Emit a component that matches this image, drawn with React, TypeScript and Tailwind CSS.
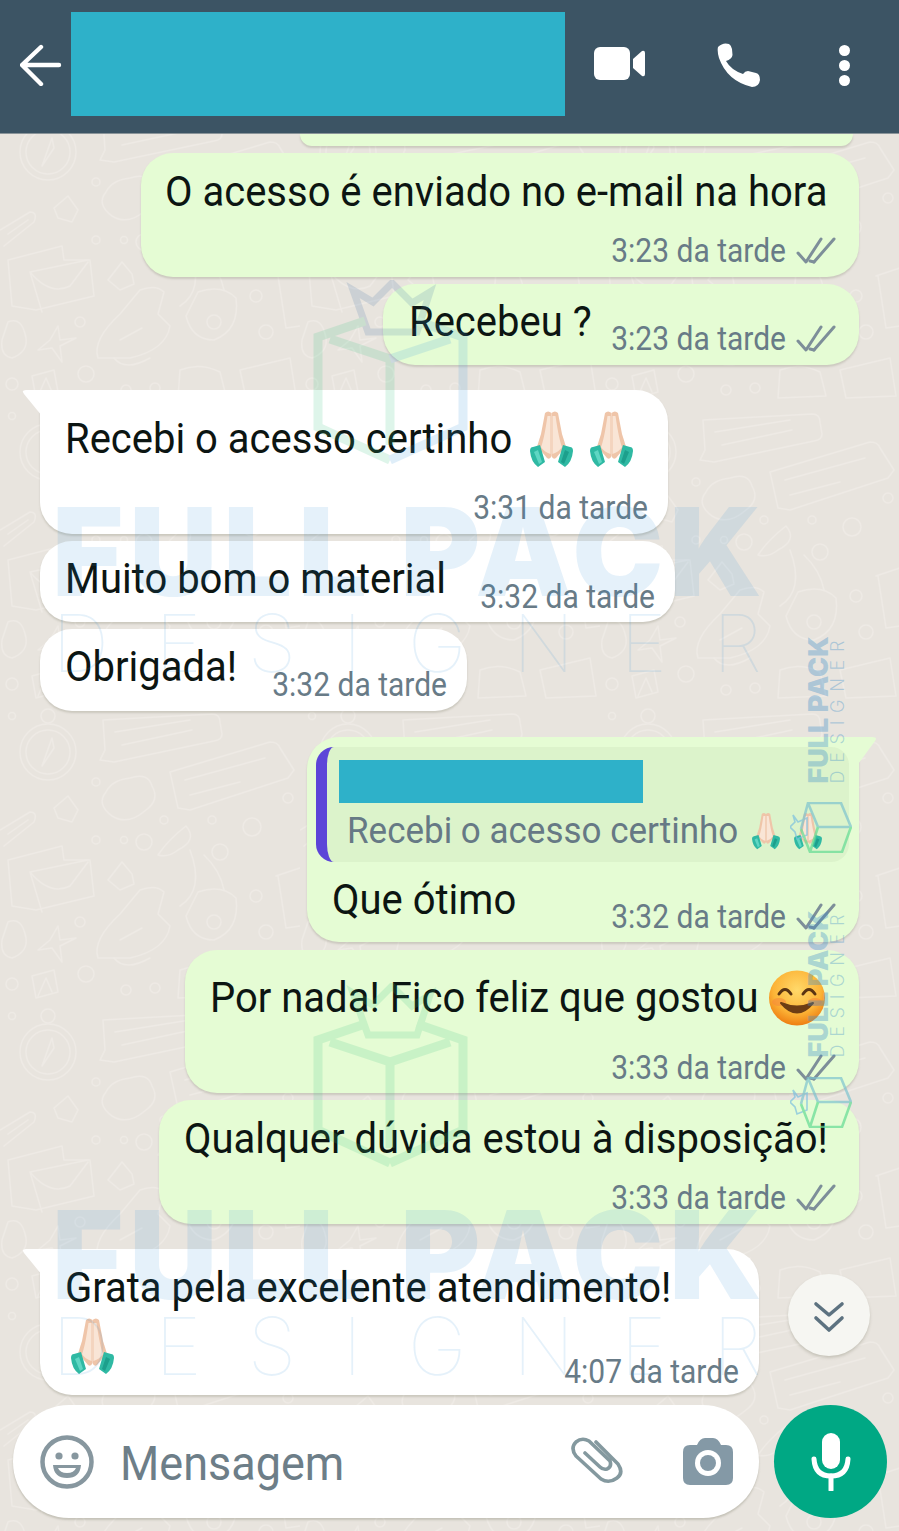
import React from "react";

const font = { fontFamily: "Roboto, 'Noto Sans', sans-serif" };

function Checks() {
  return (
    <svg width="40" height="28" viewBox="0 0 40 28" className="shrink-0" fill="none" stroke="#7d8e99" strokeWidth="3" strokeLinecap="round" strokeLinejoin="round">
      <path d="M2 16 L10 25 L25 2" />
      <path d="M18 25 L38 2" />
      <path d="M14 24 L18 25" />
    </svg>
  );
}

function Time({ t, check = true }: { t: string; check?: boolean }) {
  return (
    <div className="flex items-center gap-[10px]">
      <span className="text-[30px] leading-[34px] text-[#687b87] whitespace-nowrap inline-block scale-y-[1.08]">{t}</span>
      {check && <Checks />}
    </div>
  );
}

function Msg({ children }: { children: React.ReactNode }) {
  return <span className="text-[40px] leading-[46px] text-[#0c1512] whitespace-nowrap inline-block scale-y-[1.06]">{children}</span>;
}

function Hands({ w = 43, h = 58 }: { w?: number; h?: number }) {
  return (
    <svg width={w} height={h} viewBox="0 0 43 58" className="shrink-0">
      <path d="M15 3 Q18 0 21.5 3 L21.5 46 Q20 50 17 48 L12 42 L7 37 Q9 30 11 24 Z" fill="#efc5a9" />
      <path d="M28 3 Q25 0 21.5 3 L21.5 46 Q23 50 26 48 L31 42 L36 37 Q34 30 32 24 Z" fill="#efc5a9" />
      <path d="M17.5 6 L20.5 6 L20.5 44 Q14 42 11 37 Q14 30 17.5 6Z" fill="#f9e5d6" />
      <path d="M25.5 6 L22.5 6 L22.5 44 Q29 42 32 37 Q29 30 25.5 6Z" fill="#f9e5d6" />
      <path d="M0 41 Q0 37 3 37 L10 35 L15 52 L8 57 Q1 52 0 41Z" fill="#2fb9a3" />
      <path d="M43 41 Q43 37 40 37 L33 35 L28 52 L35 57 Q42 52 43 41Z" fill="#2fb9a3" />
      <path d="M4 42 L8 40 L12 52 L9 54Z" fill="#5fd6c3" />
      <path d="M39 42 L35 40 L31 52 L34 54Z" fill="#1d9f8c" />
    </svg>
  );
}

function Smile() {
  return (
    <svg width="58" height="56" viewBox="0 0 58 56" className="shrink-0">
      <defs>
        <radialGradient id="sm" cx="50%" cy="35%" r="65%">
          <stop offset="0%" stopColor="#ffd96a" />
          <stop offset="65%" stopColor="#fcb437" />
          <stop offset="100%" stopColor="#ee7e12" />
        </radialGradient>
      </defs>
      <ellipse cx="29" cy="28" rx="28" ry="27.5" fill="url(#sm)" />
      <ellipse cx="11" cy="32" rx="7" ry="4" fill="#f58a3a" opacity="0.6" />
      <ellipse cx="47" cy="32" rx="7" ry="4" fill="#f58a3a" opacity="0.6" />
      <path d="M11 24 Q17 15 23 24 M35 24 Q41 15 47 24" stroke="#5b3512" strokeWidth="3" fill="none" strokeLinecap="round" />
      <path d="M13 33 Q29 52 45 33 Q29 40 13 33Z" fill="#6d3d14" stroke="#6d3d14" strokeWidth="2" strokeLinejoin="round" />
    </svg>
  );
}

function Cube({ right, crown }: { right: string; crown: string }) {
  return (
    <svg viewBox="0 0 155 184" className="w-full h-full" fill="none" strokeWidth="9" strokeLinejoin="miter">
      <path d="M55 52 L40 10 L60 22 L79 3 L99 23 L117 12 L104 52 Z" stroke={crown} strokeWidth="7" />
      <path d="M52 41 L5 57 V147 L77 180 M17 59 L77 79 V165" stroke="#37c57f" />
      <path d="M104 41 L150 57 V147 L77 180 M137 59 L77 79" stroke={right} />
    </svg>
  );
}

function SmallCube() {
  return (
    <svg viewBox="0 0 62 51" className="w-full h-full" fill="none" strokeWidth="2.6">
      <path d="M3 13 L8 20 L17 16 L17 33 L7 37 L5 30 L0 25 L5 20Z" stroke="#7cc0e0" strokeWidth="1.6" />
      <path d="M11 27 L18 1 H51 L61 25 H28 L18 1" stroke="#7ec4cf" />
      <path d="M11 27 L20 50 H52 L61 25 M28 25 L20 50" stroke="#63dc93" />
    </svg>
  );
}

function BigMark({ top }: { top: string }) {
  return (
    <div className={`absolute left-[52px] w-[710px] pointer-events-none ${top}`}>
      <div className="h-[100px] flex items-center justify-between text-[#2d8fd8]/12 font-black text-[122px] leading-none whitespace-nowrap tracking-[6px]" style={{ fontFamily: "Inter, sans-serif" }}>
        <span>FULL</span>
        <span className="-mr-[6px]">PACK</span>
      </div>
      <div className="-mt-[1px] flex justify-between text-[#2d8fd8]/12 font-thin text-[80px] leading-[84px]" style={{ fontFamily: "Inter, sans-serif" }}>
        {"DESIGNER".split("").map((c, i) => (
          <span key={i}>{c}</span>
        ))}
      </div>
    </div>
  );
}

function SmallMark({ top }: { top: string }) {
  return (
    <div className={`absolute left-[806px] w-[38px] h-[143px] pointer-events-none ${top}`}>
      <div className="absolute left-[-52px] top-[52px] w-[143px] h-[38px] -rotate-90 flex flex-col justify-center" style={{ fontFamily: "Inter, sans-serif" }}>
        <div className="text-[#3e8fc9]/35 font-black text-[27px] leading-[23px] whitespace-nowrap">FULL PACK</div>
        <div className="flex justify-between text-[#3e8fc9]/35 font-light text-[18px] leading-[16px]">
          {"DESIGNER".split("").map((c, i) => (
            <span key={i}>{c}</span>
          ))}
        </div>
      </div>
    </div>
  );
}

function Wallpaper() {
  return (
    <svg className="absolute inset-0 w-full h-full" width="899" height="1531">
      <defs>
        <pattern id="doodle" x="0" y="700" width="300" height="300" patternUnits="userSpaceOnUse">
          <g fill="none" stroke="#eeeae5" strokeWidth="1.5" strokeLinejoin="round" strokeLinecap="round">
            <circle cx="48" cy="52" r="28" />
            <circle cx="48" cy="52" r="22" />
            <path d="M52 38 L42 66 L54 48Z" />
            <circle cx="48" cy="16" r="7" />
            <circle cx="12" cy="16" r="3.5" />
            <path d="M103 20 L212 14 Q220 14 220 22 L222 34 Q222 40 214 41 L114 62 L100 60 L105 50Z" />
            <path d="M115 32 L190 20 M122 45 L192 30" />
            <path d="M170 72 L270 42 Q278 42 280 48 L294 70 L288 78 L190 110 L178 108Z" />
            <path d="M185 80 L265 58 M190 95 L240 82" />
            <path d="M130 78 Q148 72 152 86 Q160 100 146 110 Q128 126 112 116 Q96 104 106 92 Q112 80 130 78Z" />
            <circle cx="96" cy="82" r="4" />
            <path d="M68 96 L78 110 L72 122 L58 118 L54 108Z" />
            <path d="M0 130 L30 112 Q38 112 34 122 L4 146" />
            <path d="M8 134 L28 120" />
            <circle cx="96" cy="140" r="4" />
            <circle cx="124" cy="140" r="3.5" />
            <circle cx="144" cy="142" r="8" />
            <circle cx="164" cy="120" r="4" />
            <circle cx="252" cy="127" r="9" />
            <circle cx="212" cy="120" r="4" />
            <circle cx="220" cy="152" r="8" />
            <circle cx="288" cy="98" r="5" />
            <path d="M158 155 Q168 140 186 126 Q198 140 178 150 Q168 158 158 155Z" />
            <path d="M190 150 Q205 190 180 206 M204 155 Q220 170 224 190" />
            <path d="M8 160 L62 146 L64 160 L90 160 L94 196 L36 210 L12 206Z" />
            <path d="M30 172 L88 160 M30 172 L42 212 M30 172 Q50 196 70 186 L88 162" />
            <path d="M122 162 L132 174 L134 184 L120 190 L108 180Z" />
            <path d="M140 190 Q156 184 164 192 L158 214 L170 226 Q166 250 130 258 L98 258 Q92 240 120 214 Z" />
            <path d="M120 240 L142 228" />
            <path d="M114 258 Q125 272 150 258" />
            <path d="M198 192 Q222 184 236 198 Q240 230 214 240 Q192 240 186 216Z" />
            <circle cx="214" cy="222" r="7" />
            <circle cx="256" cy="196" r="6" />
            <circle cx="266" cy="232" r="7" />
            <path d="M276 176 L300 168 M278 176 L286 228 L300 226" />
            <path d="M8 222 Q22 216 26 238 Q28 252 12 258 Q0 256 2 240Z" />
            <path d="M58 226 L60 240 L76 238 L60 246 L62 262 L52 248 L38 250 L50 240Z" />
            <circle cx="80" cy="222" r="5" />
            <circle cx="86" cy="274" r="8" />
            <circle cx="12" cy="284" r="6" />
            <path d="M32 276 L54 270 L58 292 L36 298Z M38 296 L46 278 L52 292" />
            <circle cx="126" cy="290" r="5" />
            <circle cx="155" cy="288" r="5" />
            <path d="M180 270 Q200 262 220 272 L226 296 L178 298Z" />
            <path d="M240 270 L290 258 L296 296 L246 298Z" />
          </g>
        </pattern>
      </defs>
      <rect width="899" height="1531" fill="#e8e4de" />
      <rect width="899" height="1531" fill="url(#doodle)" />
    </svg>
  );
}

export default function App() {
  const green = "relative bg-[#e5fcd4] rounded-[32px] shadow-[0_2px_2px_rgba(120,120,100,0.25)]";
  const white = "relative bg-white rounded-[32px] shadow-[0_2px_2px_rgba(120,120,100,0.25)]";
  return (
    <div className="relative w-[899px] h-[1531px] overflow-hidden" style={font}>
      <Wallpaper />
      <div className="relative flex flex-col h-full">
        {/* Header */}
        <header className="relative z-10 h-[134px] shrink-0 bg-[#3c5464] border-b border-[#8a9499] flex items-center pb-[3px]">
          <svg width="42" height="42" viewBox="0 0 42 42" className="ml-[20px] shrink-0" fill="none" stroke="white" strokeWidth="4.4" strokeLinecap="round" strokeLinejoin="round">
            <path d="M39 21 H3 M21 3 L2 21 L21 40" />
          </svg>
          <div className="ml-[9px] mb-[3px] w-[494px] h-[104px] bg-[#2eb1c9] shrink-0" />
          <svg width="52" height="36" viewBox="0 0 52 36" className="ml-[29px] shrink-0" fill="white">
            <rect x="0" y="0" width="36" height="33" rx="6" />
            <path d="M39 12 L48 4 Q51 3 51 6 V27 Q51 30 48 29 L39 21Z" />
          </svg>
          <svg width="44" height="45" viewBox="0 0 44 45" className="ml-[71px] shrink-0" fill="white">
            <path d="M1 4 Q6 -1 12 1 Q14 2 15 6 L15.5 12 Q15 16 9 18 Q14 27 26 31 Q28 28 31 28 L39 30 Q43 31 43 37 Q42 44 35 44 Q10 38 2 15 Q0 8 1 4Z" />
          </svg>
          <div className="ml-[78px] flex flex-col gap-[4px] shrink-0">
            <div className="w-[11px] h-[11px] rounded-full bg-white" />
            <div className="w-[11px] h-[11px] rounded-full bg-white" />
            <div className="w-[11px] h-[11px] rounded-full bg-white" />
          </div>
        </header>

        {/* Messages */}
        <main className="flex flex-col flex-1 min-h-0">
          <div className="ml-[300px] w-[553px] h-[12px] bg-[#e5fcd4] rounded-b-[24px] shadow-[0_2px_2px_rgba(120,120,100,0.25)]" />

          <div className={`${green} ml-[141px] mt-[7px] w-[718px] h-[124px] pl-[24px] pr-[23px] pt-[16px]`}>
            <Msg>O acesso é enviado no e-mail na hora</Msg>
            <div className="flex justify-end mt-[19px]"><Time t="3:23 da tarde" /></div>
          </div>

          <div className={`${green} ml-[383px] mt-[7px] w-[476px] h-[81px] pl-[26px] pr-[23px] pt-[16px] flex justify-between`}>
            <Msg>Recebeu ?</Msg>
            <div className="pt-[22px]"><Time t="3:23 da tarde" /></div>
          </div>

          <div className={`${white} ml-[40px] mt-[25px] w-[628px] h-[144px] pl-[25px] pr-[20px] pt-[20px] rounded-tl-none`}>
            <svg width="20" height="30" viewBox="0 0 20 30" className="absolute left-[-18px] top-0"><path d="M20 0 H4 Q-1 0 2 4 L20 26Z" fill="white" /></svg>
            <div className="flex items-start">
              <div className="pt-[6px]"><Msg>Recebi o acesso certinho</Msg></div>
              <div className="ml-[18px] flex gap-[17px]">
                <Hands />
                <Hands />
              </div>
            </div>
            <div className="flex justify-end mt-[23px]"><Time t="3:31 da tarde" check={false} /></div>
          </div>

          <div className={`${white} ml-[40px] mt-[7px] w-[635px] h-[81px] pl-[25px] pr-[20px] pt-[16px] flex justify-between`}>
            <Msg>Muito bom o material</Msg>
            <div className="pt-[23px]"><Time t="3:32 da tarde" check={false} /></div>
          </div>

          <div className={`${white} ml-[40px] mt-[7px] w-[427px] h-[82px] pl-[25px] pr-[20px] pt-[16px] flex justify-between`}>
            <Msg>Obrigada!</Msg>
            <div className="pt-[23px]"><Time t="3:32 da tarde" check={false} /></div>
          </div>

          <div className={`${green} ml-[307px] mt-[26px] w-[552px] h-[205px] rounded-tr-none pt-[10px]`}>
            <svg width="22" height="32" viewBox="0 0 22 32" className="absolute right-[-19px] top-0"><path d="M0 0 H16 Q22 0 19 4 L0 30Z" fill="#e5fcd4" /></svg>
            <div className="ml-[9px] w-[533px] h-[115px] bg-[#dcf3cb] rounded-[18px] border-l-[11px] border-[#5c45d8] pl-[12px] pt-[13px] overflow-hidden">
              <div className="w-[304px] h-[43px] bg-[#2eb1c9]" />
              <div className="mt-[6px] ml-[8px] flex items-center gap-[14px]">
                <span className="text-[35px] leading-[44px] text-[#667985] whitespace-nowrap inline-block scale-y-[1.06]">Recebi o acesso certinho</span>
                <Hands w={28} h={38} />
                <Hands w={28} h={38} />
              </div>
            </div>
            <div className="flex justify-between pl-[25px] pr-[23px] mt-[16px]">
              <Msg>Que ótimo</Msg>
              <div className="pt-[22px]"><Time t="3:32 da tarde" /></div>
            </div>
          </div>

          <div className={`${green} ml-[185px] mt-[8px] w-[674px] h-[143px] pl-[25px] pr-[23px] pt-[20px]`}>
            <div className="flex items-center gap-[10px]">
              <Msg>Por nada! Fico feliz que gostou</Msg>
              <Smile />
            </div>
            <div className="flex justify-end mt-[25px]"><Time t="3:33 da tarde" /></div>
          </div>

          <div className={`${green} ml-[159px] mt-[7px] w-[700px] h-[124px] pl-[25px] pr-[23px] pt-[16px]`}>
            <Msg>Qualquer dúvida estou à disposição!</Msg>
            <div className="flex justify-end mt-[19px]"><Time t="3:33 da tarde" /></div>
          </div>

          <div className="flex items-start mt-[25px]">
            <div className={`${white} ml-[40px] w-[719px] h-[146px] pl-[25px] pr-[20px] pt-[16px] rounded-tl-none`}>
              <svg width="20" height="30" viewBox="0 0 20 30" className="absolute left-[-18px] top-0"><path d="M20 0 H4 Q-1 0 2 4 L20 26Z" fill="white" /></svg>
              <Msg>Grata pela excelente atendimento!</Msg>
              <div className="flex justify-between items-end h-[78px]">
                <div className="pl-[6px] pt-[6px] self-start"><Hands /></div>
                <Time t="4:07 da tarde" check={false} />
              </div>
            </div>
            <button className="ml-[29px] mt-[25px] w-[82px] h-[82px] rounded-full bg-[#f6f6f2] shadow-[0_2px_3px_rgba(120,120,100,0.3)] flex items-center justify-center shrink-0">
              <svg width="32" height="32" viewBox="0 0 32 32" className="mt-[4px]" fill="none" stroke="#5d7280" strokeWidth="3.6" strokeLinecap="round" strokeLinejoin="round">
                <path d="M3 3 L16 14 L29 3 M3 17 L16 29 L29 17" />
              </svg>
            </button>
          </div>
        </main>

        {/* Input */}
        <footer className="flex items-center absolute left-[13px] top-[1405px]">
          <div className="w-[746px] h-[113px] bg-white rounded-[56px] shadow-[0_2px_2px_rgba(120,120,100,0.3)] flex items-center pl-[27px]">
            <svg width="54" height="54" viewBox="0 0 54 54" className="shrink-0" fill="none" stroke="#87979f" strokeWidth="4.5">
              <circle cx="27" cy="27" r="24.5" />
              <circle cx="19" cy="21" r="3.6" fill="#87979f" stroke="none" />
              <circle cx="35" cy="21" r="3.6" fill="#87979f" stroke="none" />
              <path d="M13 30 H41 Q40 43 27 43 Q14 43 13 30Z" fill="#87979f" stroke="none" />
              <path d="M18 33 H36 Q34 38 27 38 Q20 38 18 33Z" fill="white" stroke="none" />
            </svg>
            <span className="ml-[26px] mt-[4px] text-[45px] leading-[50px] text-[#6d7e88] inline-block scale-y-[1.06]">Mensagem</span>
            <svg width="54" height="50" viewBox="0 0 54 50" className="ml-[226px] shrink-0" fill="none" stroke="#84999f" strokeWidth="3.6" strokeLinecap="round" strokeLinejoin="round">
              <path d="M26 5 L48 27 Q54 36 47 41 Q39 47 31 42 L6 19 Q0 11 6 5 Q12 0 19 4 L40 24 Q42 30 37 32 Q33 33 30 30 L15 16" />
            </svg>
            <svg width="50" height="47" viewBox="0 0 50 47" className="ml-[59px] shrink-0">
              <path d="M14 7 Q17 0 22 0 H30 Q35 0 38 7 H43 Q50 7 50 14 V40 Q50 47 43 47 H7 Q0 47 0 40 V14 Q0 7 7 7Z" fill="#8499a6" />
              <circle cx="25" cy="25" r="13" fill="white" />
              <circle cx="25" cy="25" r="8" fill="#8499a6" />
            </svg>
          </div>
          <div className="ml-[15px] w-[113px] h-[113px] rounded-full bg-[#00a884] flex items-center justify-center shrink-0">
            <svg width="40" height="58" viewBox="0 0 40 58" fill="none">
              <rect x="11" y="0" width="18" height="36" rx="9" fill="white" />
              <path d="M3 26 Q4 43 20 43 Q36 43 37 26" stroke="white" strokeWidth="5" strokeLinecap="round" />
              <path d="M20 43 V57" stroke="white" strokeWidth="5" strokeLinecap="round" />
            </svg>
          </div>
        </footer>
      </div>

      {/* Watermarks lying over the chat */}
      <BigMark top="top-[502px]" />
      <BigMark top="top-[1205px]" />
      <div className="absolute left-[313px] top-[280px] w-[155px] h-[184px] opacity-[0.16] pointer-events-none"><Cube right="#3f9de0" crown="#3a6ea5" /></div>
      <div className="absolute left-[313px] top-[983px] w-[155px] h-[184px] opacity-[0.16] pointer-events-none"><Cube right="#37c57f" crown="#37c57f" /></div>
      <SmallMark top="top-[641px]" />
      <SmallMark top="top-[915px]" />
      <div className="absolute left-[790px] top-[802px] w-[62px] h-[51px] opacity-70 pointer-events-none"><SmallCube /></div>
      <div className="absolute left-[790px] top-[1077px] w-[62px] h-[51px] opacity-70 pointer-events-none"><SmallCube /></div>
    </div>
  );
}
